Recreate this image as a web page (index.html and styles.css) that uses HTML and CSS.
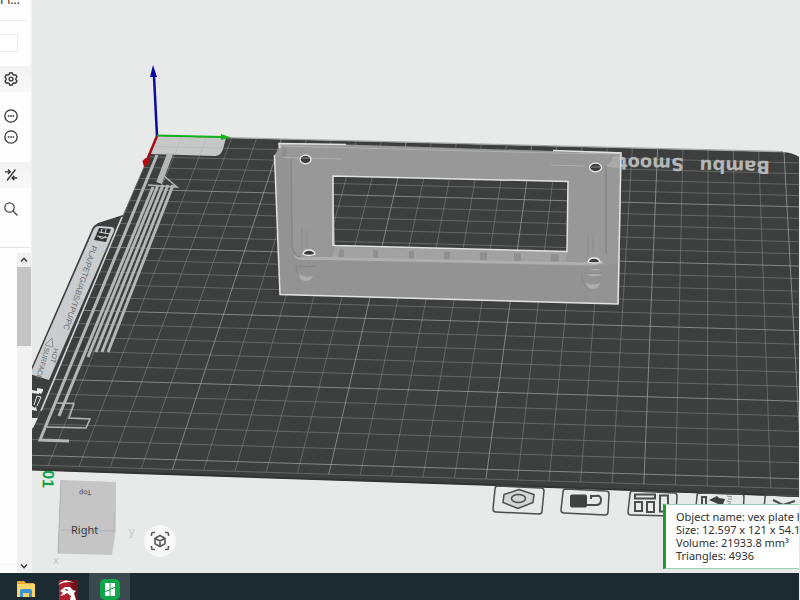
FILE: index.html
```html
<!DOCTYPE html>
<html lang="en">
<head>
<meta charset="utf-8">
<title>Slicer – Prepare</title>
<link rel="stylesheet" href="styles.css">
</head>
<body>
<div class="app">
  <main class="workspace">
    <aside class="sidebar">
      <div class="plate-name">Pl...</div>
      <div class="field-row"><input class="field" type="text" aria-label="Plate type"></div>
      <div class="section-head">
        <button class="icon-btn" aria-label="Settings">
          <svg viewBox="0 0 14 14"><path d="M5.6 1h2.8l.5 1.6 1.2.6 1.6-.5 1.3 2.3-1.1 1.3v1.4l1.1 1.3-1.3 2.3-1.6-.5-1.2.6-.5 1.6H5.6l-.5-1.6-1.2-.6-1.6.5L1 9l1.1-1.3V6.300L1 5l1.300-2.300 1.600.5 1.200-.6z"/><circle cx="7" cy="7" r="1.900"/></svg>
        </button>
      </div>
      <div class="filaments">
        <button class="icon-btn" aria-label="Filament 1 options"><svg viewBox="0 0 14 14"><circle cx="7" cy="7" r="6.200"/><path d="M3.800 7h1.600M6.200 7h1.600M8.600 7h1.600"/></svg></button>
        <button class="icon-btn" aria-label="Filament 2 options"><svg viewBox="0 0 14 14"><circle cx="7" cy="7" r="6.200"/><path d="M3.800 7h1.600M6.200 7h1.600M8.600 7h1.600"/></svg></button>
      </div>
      <div class="section-head">
        <button class="icon-btn" aria-label="Compare presets"><svg viewBox="0 0 14 14"><path d="M11.500 1.500L3 12.500M1 3.800h5M4 1.500l2.300 2.300L4 6M13.200 10H8.500M10.300 7.700L8 10l2.300 2.300"/></svg></button>
      </div>
      <div class="search-row">
        <button class="icon-btn search" aria-label="Search"><svg viewBox="0 0 14 14"><circle cx="5.500" cy="5.500" r="4.700"/><path d="M9 9l4.500 4.500"/></svg></button>
      </div>
      <div class="settings-list">
        <div class="settings-page"></div>
        <div class="scrollbar">
          <button class="arrow" aria-label="Scroll up"><svg viewBox="0 0 8 6"><path d="M1 4.500l3-3 3 3"/></svg></button>
          <div class="thumb"></div>
          <button class="arrow" aria-label="Scroll down"><svg viewBox="0 0 8 6"><path d="M1 1.500l3 3 3-3"/></svg></button>
        </div>
      </div>
    </aside>

    <section class="viewport">
      <svg class="scene" viewBox="32 0 768 573" preserveAspectRatio="xMinYMin slice" role="img" aria-label="Build plate with model">
        <defs>
          <clipPath id="bed-clip"><path d="M157 136L783 152Q794 153 801 158V496L0 469L21 455z"/></clipPath>
        </defs>

        <!-- bed -->
        <path class="bed" d="M157 136L783 152Q794 153 801 158V497L480 485L150 474L0 469V440L92 229Q94 225 98 223L123 215z"/>
        <path class="bed-rim" d="M0 468.500L150 473.500L480 484.500L801 496"/>
        <path class="bed-top" d="M226 137.500L783 151.500"/>
        <path class="patch" d="M157 136H158L226 138L223 149Q221 156 215 156L150 154z"/>
        <g id="grid" clip-path="url(#bed-clip)"></g>

        <!-- printed label on the left -->
        <path class="label" d="M99 226L112 227Q115 228 114 231L49 380L30 374L36 361L93 231Q95 226 99 226z"/>
        <path class="label-line" d="M122 217L41 411"/>
        <g class="code">
          <path d="M99 228l12 1-5 13-12-2z"/>
          <path class="code-cut" d="M99 232l11 2M102 229l-1 4M106 229l-1 5M97 236l11 2M99 237l3 2 4-3"/>
        </g>
        <text class="label-text" transform="translate(92 245) rotate(109)">PLA/PETG/ABS/TPU/PC</text>
        <path class="warn" d="M52 338l1 9-8-2z"/>
        <text class="hot" transform="translate(54 348) rotate(104)">HOT</text>
        <text class="hot" transform="translate(45 347) rotate(106)">SURFACE</text>
        <path class="white" d="M32 390l5 1v-3l6 1v2l-2 3-2-1v1l-7-1zM32 418h6l-5 10h-1zM32 406l3 2 1-2 1 5-5-1z"/>
        <path class="white-line" d="M34 405l3-9 4 1-4 9"/>

        <!-- wiping lines -->
        <g class="stripes">
          <path d="M157 155L40 440L69 441"/>
          <path d="M153 187L59 416"/>
          <path d="M158 185L88 357"/>
          <path d="M163 185L96 352"/>
          <path d="M168 185L102 352"/>
          <path d="M173 185L108 352"/>
          <path class="wide" d="M170 154L159 183"/>
          <path class="thin" d="M163 175L177 187L148 185M57 403L74 403.500L69 418L90 419L86 428L47 427"/>
        </g>

        <text class="brand" transform="translate(770 161) rotate(181)">Bambu</text>
        <text class="brand" transform="translate(684 158) rotate(181)">Smooth</text>
        <text class="plate-no" transform="translate(43 470) rotate(92)">01</text>

        <!-- model -->
        <path class="model" fill-rule="evenodd" d="M279 143L346 144.500L553 151L621.500 152L619 304L280 294.500L274.500 155L278 150zM333 176L568 181.500L567 251.500L335 245.500z"/>
        <path class="front" d="M275 157L288 158L291 248Q293 260 302 260L600 266L618 264V303L281 294z"/>
        <path class="sill" d="M335 247L567 252L566 262L332 257z"/>
        <path class="notches" d="M340 249l4 1v8l-6-1zM373 250l5 .5v8h-5zM409 251l5 .5v8h-5zM444 251.500l6 .5v8h-6zM480 252l7 .5v8h-7zM514 253l7 .5v8h-7zM551 254l8 .5v8h-8z"/>
        <path class="ledge" d="M296 255Q297 259 302 258.500L331 258.500L594 264L603 262"/>
        <path class="ridge" d="M284 150V155M291 159L292 246Q294 257 301 257M606 166V254"/>
        <path class="highlight" d="M280 146L553 153L619 154M284 157.500L342 159M551 165L585 166"/>
        <path class="shade" d="M283 147l3 1v8l-3-1zM612 156v8h-5M302 228v22M307 230v19M588 234v22M593 236v16"/>
        <path class="corner" d="M607 164q5 0 5-7l8-2v13l-13-1z"/>
        <path class="outline" d="M280 148L279 143.500L346 144.500M274.500 155L280 294.500L618 304L621 153L553 150.500"/>
        <path class="outline" d="M333 245V176L568 181.500L567 251.500L335 245.500z"/>
        <g class="holes">
          <ellipse cx="305.500" cy="159.500" rx="5.500" ry="4.300"/>
          <ellipse cx="595.500" cy="167.500" rx="6" ry="4.300"/>
          <path d="M303 254q1-4 6-4t6 4q-6 3-12 0zM588 262q1-4 6-4t6 4q-6 2-12 0z"/>
        </g>
        <path class="hole-line" d="M301 158h9M591 167h9"/>
        <path class="dimple-dark" d="M315 266l-14 1q-5 0-5-2 0 12 8 14M582 275q0 8 4 11M588 273q6 3 13 0"/>
        <path class="dimple" d="M299 274q5 4 14 2-1 5-8 5-6-1-6-7zM586 283q6 3 14 0-2 6-7 6t-7-6zM590 269q5 3 11 0M588 275q6 3 13 0v-1h-13z"/>

        <!-- axes -->
        <path class="axis-z" d="M157 136L154 76"/><path class="fill-z" d="M153 65l4 12h-7z"/>
        <path class="axis-y" d="M157 135.500L222 137"/><path class="fill-y" d="M231 137.500l-10-3.500v6z"/>
        <path class="axis-x" d="M157 136L147 160"/><path class="fill-x" d="M144 167l-1.500-6 3-3 4 2-.5 3z"/>

        <!-- plate tools -->
        <g class="tools">
          <path d="M498 486l43 2q3 0 3 3l-2 20q0 3-3 3l-43-2q-3 0-3-3l2-20q0-3 3-3z"/>
          <path d="M566 489l40 2q3 0 3 3l-1 18q0 3-3 3l-41-2q-3 0-3-3l2-18q0-3 3-3z"/>
          <path d="M633 491l41 2q3 0 3 3l-1 17q0 3-3 3l-42-1q-3 0-3-3l2-18q0-3 3-3z"/>
          <path d="M699 493l42 1q3 0 3 3l-1 20h-48l2-21q0-3 2-3z"/>
          <path d="M767 495l40 1v22h-44l2-20q0-3 2-3z"/>
          <path class="nut" d="M519 489.500l15 5-1 8-15 6-15-6 1-8z"/><ellipse cx="518.500" cy="498.500" rx="7" ry="4"/>
          <path class="solid" d="M572 494.500h13q2 0 2 2v9q0 2-2 2h-13q-2 0-2-2v-9q0-2 2-2z"/>
          <path class="thick" d="M587 505h9q5 0 5-5t-5-4h-5v3"/>
          <path class="thick" d="M635 494.500h20v4h-20zM635 502h7v9h-7zM647 502h7v10h-7zM660 495.500h8v16h-8z"/>
          <path class="thick" d="M702 497h4v16h-4zM773 500l10 5 12-4"/>
          <path class="solid" d="M709 500l8-4 2 2 6 1-3 8-4-3z"/>
          <path class="scribble" d="M727 496l5 1M728 499h4M727 501l4 1M728 504h3"/>
        </g>

        <!-- view cube -->
        <g class="cube">
          <path class="cube-side" d="M61 480L58 553.500L59.500 554L63 481z"/>
          <path class="cube-face" d="M61 480L116 482L115.700 531L112 555L58 553.500z"/>
          <path class="cube-edge" d="M61 480L58 553.500M62 530L115 531M114 513v20"/>
          <text class="cube-mark" transform="translate(91 490) rotate(177)">Top</text>
          <text class="cube-text" x="71" y="534">Right</text>
          <text class="cube-axis" x="129" y="535">y</text>
          <text class="cube-axis" x="53" y="564">x</text>
        </g>
      </svg>

      <button class="fit-view" aria-label="Fit view">
        <svg viewBox="0 0 20 20"><path d="M1.500 5V3q0-1.500 1.500-1.500h2M15 1.500h2q1.500 0 1.500 1.500v2M18.500 15v2q0 1.500-1.500 1.500h-2M5 18.500H3q-1.500 0-1.500-1.500v-2M10 4.500l5 2.700v5.600l-5 2.700-5-2.700V7.200zM5 7.200l5 2.800 5-2.800M10 10v5.500"/></svg>
      </button>

      <div class="info" role="status">
        <div>Object name: vex plate h</div>
        <div>Size: 12.597 x 121 x 54.12</div>
        <div>Volume: 21933.8 mm³</div>
        <div>Triangles: 4936</div>
      </div>
    </section>
  </main>

  <nav class="taskbar" aria-label="Taskbar">
    <button class="task" aria-label="File Explorer">
      <svg viewBox="0 0 22 22"><path fill="#e9a92c" d="M2 3h7l2 2h8v5H2z"/><path fill="#fbd568" d="M2 6h18v13H2z"/><path fill="#3a94dc" d="M5 19v-6q0-2 2-2h8q2 0 2 2v6h-3v-4H8v4z"/></svg>
    </button>
    <button class="task" aria-label="Dragon">
      <svg viewBox="0 0 22 22"><path fill="#b31f2c" d="M2 2h19v20H2z"/><path fill="#721019" d="M12 2h9v20h-4z"/><path fill="#fff" d="M1 7Q8-1 17 5q-8-3-16 2zM3 13l5-4 5 0 3 3 3 1-2 2 2 7h-6l1-4-4-3-3 2-4 1 3-3z"/><path fill="#721019" d="M8 11l4 1-3 1z"/></svg>
    </button>
    <button class="task active" aria-label="Slicer">
      <svg viewBox="0 0 22 22"><rect x="1" y="1" width="20" height="21" rx="5" fill="#0aa648"/><path fill="#fff" d="M6 5h4.500v6.500L6 13zM11.500 5H16v4l-4.500 1.500zM6 14l4.500-1.500V18H6zM11.500 11.500L16 10v8h-4.500z"/></svg>
    </button>
  </nav>
</div>
<script src="grid.js"></script>
</body>
</html>
```

FILE: styles.css
```css
* { box-sizing: border-box; }
body {
  margin: 0;
  background: #e8eaea;
  color: #303030;
  font-family: "Noto Sans", "Open Sans", sans-serif;
  font-size: 11px;
}
button { border: 0; padding: 0; background: none; }
svg { display: block; }

.app { display: flex; flex-direction: column; height: 100vh; padding-right: 1px; overflow: hidden; }
.workspace { flex: 1; display: flex; min-height: 0; }

/* sidebar */
.sidebar { width: 32px; display: flex; flex-direction: column; background: #fefefe; border-right: 1px solid #f1f1f1; }
.plate-name { height: 21px; margin-right: 4px; border-bottom: 1px solid #eee; font-size: 12px; line-height: 0; white-space: nowrap; }
.field-row { padding: 13px 0 14px; }
.field { display: block; width: 18px; height: 18px; border: 1px solid #eaeaea; border-left: 0; background: #fff; padding: 0; }
.section-head { height: 26px; padding: 6px 4px; background: linear-gradient(#f3f3f3, #f8f8f8); }
.icon-btn { display: block; width: 14px; height: 14px; }
.icon-btn svg { width: 14px; height: 14px; fill: none; stroke: #333; stroke-width: 1.3; }
.icon-btn.search svg { stroke: #444; stroke-width: 1.2; }
.filaments { display: flex; flex-direction: column; gap: 7px; padding: 17px 4px 18px; }
.search-row { height: 60px; padding: 14px 4px; border-bottom: 1px solid #e6e6e6; }
.settings-list { flex: 1; display: flex; min-height: 0; padding-top: 5px; }
.settings-page { flex: 1; border-bottom: 1px solid #f1f1f1; margin-bottom: 8px; }
.scrollbar { width: 14px; display: flex; flex-direction: column; background: #f1f1f1; }
.arrow { height: 14px; display: grid; place-items: center; }
.arrow svg { width: 8px; height: 6px; fill: none; stroke: #444; stroke-width: 1.7; }
.thumb { height: 79px; background: #c4c4c4; margin-bottom: auto; }

/* viewport */
.viewport { flex: 1; min-width: 0; position: relative; overflow: hidden; background: #e8e9e9; }
.scene { width: 100%; height: 100%; }
.bed { fill: #3d3f3e; }
.bed-rim { fill: none; stroke: #333; stroke-width: 2; }
.bed-top { fill: none; stroke: #a4a6a5; }
.patch { fill: #c6c8c8; }
.grid-minor { stroke: #a5a8a7; stroke-opacity: .38; }
.grid-major { stroke: #b2b5b4; stroke-opacity: .6; }
.label { fill: #c9cdcf; }
.label-line { stroke: #d9dcdc; stroke-width: 1.5; }
.code { fill: #303232; }
.code-cut { fill: none; stroke: #d4d6d6; }
.label-text { font: 8px "Liberation Sans", sans-serif; fill: #676b6d; }
.hot { font: 7px "Liberation Sans", sans-serif; fill: #676b6d; }
.warn { fill: none; stroke: #8f9395; }
.white { fill: #e8eaea; }
.white-line { fill: none; stroke: #e8eaea; }
.stripes { fill: none; stroke: #b4b7b6; stroke-width: 3; }
.stripes .wide { stroke-width: 6; }
.stripes .thin { stroke-width: 1.5; }
.brand { font: bold 18px "DejaVu Sans", sans-serif; fill: #b5b7b6; }
.plate-no { font: bold 16px "Liberation Sans", sans-serif; fill: #0aa648; }

.model { fill: #989898; }
.front { fill: #939393; }
.sill { fill: #a2a2a2; }
.notches { fill: #8f8f8f; }
.ledge { fill: none; stroke: #afafaf; stroke-width: 3; }
.ridge { fill: none; stroke: #858585; stroke-width: 1.5; }
.highlight { fill: none; stroke: #b0b0b0; }
.shade { fill: none; stroke: #8b8b8b; }
.corner { fill: #a9a9a9; }
.outline { fill: none; stroke: #e2e2e2; stroke-width: 1.5; }
.holes { fill: #3b3c3c; stroke: #ececec; stroke-width: 1.3; }
.hole-line { stroke: #858585; }
.dimple { fill: #adadad; }
.dimple-dark { fill: none; stroke: #848484; }

.axis-x, .axis-y, .axis-z { fill: none; stroke-width: 2.5; }
.axis-x { stroke: #a50b10; }
.axis-y { stroke: #13b31c; stroke-width: 2; }
.axis-z { stroke: #0b0b9c; }
.fill-x { fill: #b20c10; }
.fill-y { fill: #13b31c; }
.fill-z { fill: #0b0b9c; }

.tools { fill: none; stroke: #4b4d4d; stroke-width: 1.5; }
.tools .nut { fill: #d3d5d5; }
.tools .solid { fill: #3f4141; stroke: none; }
.tools .thick { stroke-width: 2; }
.tools .scribble { stroke-width: 1; stroke: #888; }

.cube-face { fill: #c5c5c6; }
.cube-side { fill: #b4b4bf; }
.cube-edge { fill: none; stroke: #b0b2b6; }
.cube-text { font: 11px "Noto Sans", sans-serif; fill: #383838; }
.cube-mark { font: 7px "Noto Sans", sans-serif; fill: #444; }
.cube-axis { font: 11px "Noto Sans", sans-serif; fill: #c6c8c8; }

.fit-view { position: absolute; left: 112px; bottom: 16px; width: 32px; height: 32px; border-radius: 50%; background: #f8f8f8; display: grid; place-items: center; }
.fit-view svg { width: 20px; height: 20px; fill: none; stroke: #5b5d5d; stroke-width: 1.6; }

.info {
  position: absolute;
  left: 631px;
  bottom: 4px;
  min-width: 160px;
  padding: 5px 10px 6px;
  background: #fff;
  border: 1px solid #9bd3ad;
  border-left: 3px solid #16a035;
  line-height: 13px;
  white-space: nowrap;
}

/* taskbar */
.taskbar { height: 27px; display: flex; padding-left: 5px; background: #1b2b31; overflow: hidden; }
.task { width: 41px; height: 27px; padding: 5px 10px 0; margin-right: 2px; }
.task svg { width: 22px; height: 22px; }
.task + .task { margin-left: -1px; }
.task.active { background: #3b494f; }
```

FILE: grid.js
```js
// Perspective projection of the 256 mm bed; u and v are measured in 10 mm cells.
const corners = [[157, 136], [784, 152], [802, 479], [21, 455]];
const SPAN = 25;
const EDGE = 25.6;

const [p0, p1, p2, p3] = corners;
const dx1 = p1[0] - p2[0], dx2 = p3[0] - p2[0], sx = p0[0] - p1[0] + p2[0] - p3[0];
const dy1 = p1[1] - p2[1], dy2 = p3[1] - p2[1], sy = p0[1] - p1[1] + p2[1] - p3[1];
const det = dx1 * dy2 - dx2 * dy1;
const g = (sx * dy2 - dx2 * sy) / det;
const h = (dx1 * sy - sx * dy1) / det;

function project(u, v) {
  const a = u / SPAN, b = v / SPAN, w = g * a + h * b + 1;
  return [0, 1].map(i =>
    ((p1[i] - p0[i] + g * p1[i]) * a + (p3[i] - p0[i] + h * p3[i]) * b + p0[i]) / w);
}

function addLine(from, to, major) {
  const line = document.createElementNS("http://www.w3.org/2000/svg", "line");
  const [x1, y1] = project(...from), [x2, y2] = project(...to);
  Object.entries({ x1, y1, x2, y2 }).forEach(([k, n]) => line.setAttribute(k, n.toFixed(2)));
  line.setAttribute("class", major ? "grid-major" : "grid-minor");
  document.getElementById("grid").append(line);
}

for (let i = 0; i <= SPAN; i++) {
  addLine([i, 0], [i, EDGE], i % 5 === 0);
  addLine([0, i], [EDGE, i], i % 5 === 0);
}
addLine([0, EDGE], [EDGE, EDGE], false);
```
